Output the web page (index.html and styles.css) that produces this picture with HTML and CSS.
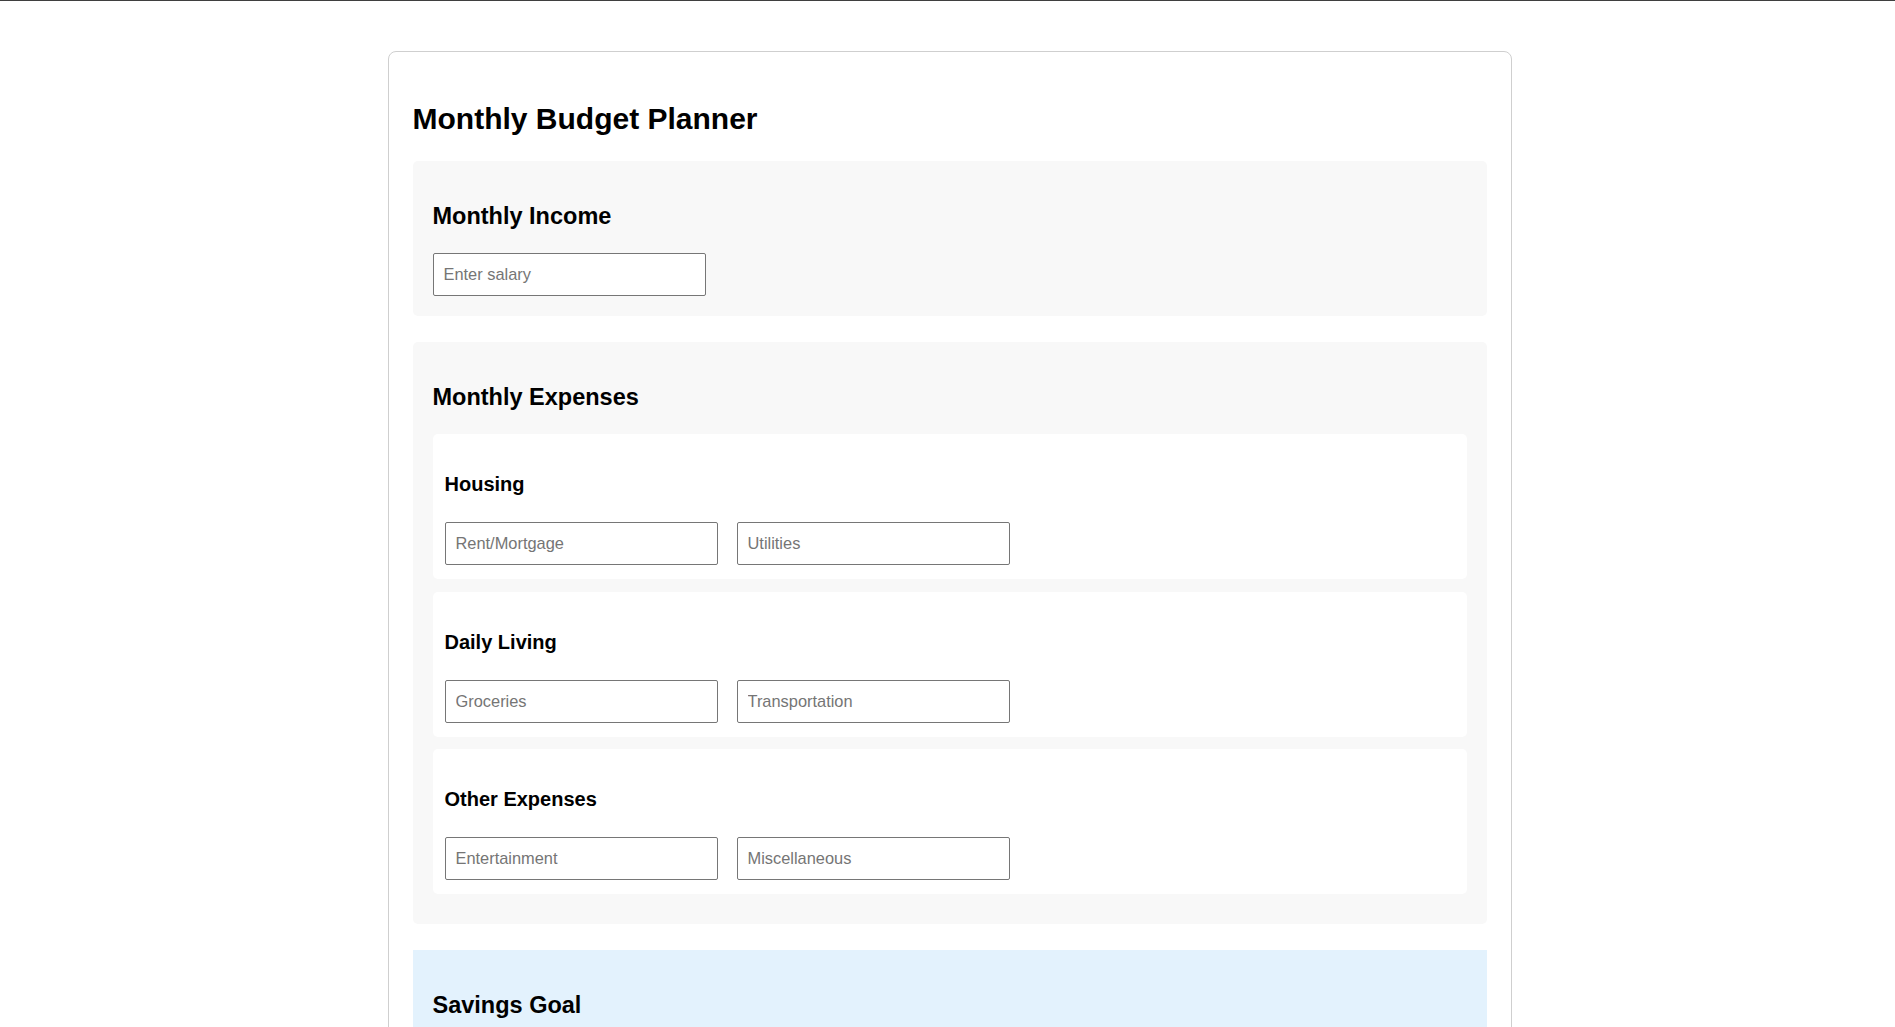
FILE: index.html
```html
<!DOCTYPE html>
<html lang="en">
<head>
<meta charset="utf-8">
<title>Monthly Budget Planner</title>
<link rel="stylesheet" href="styles.css">
</head>
<body>
<div class="container">
  <h1 class="title">Monthly Budget Planner</h1>

  <section class="section">
    <h2 class="section-title">Monthly Income</h2>
    <input class="field" type="number" placeholder="Enter salary">
  </section>

  <section class="section">
    <h2 class="section-title">Monthly Expenses</h2>
    <div class="categories">
      <div class="category">
        <h3 class="category-title">Housing</h3>
        <div class="field-row">
          <input class="field" type="number" placeholder="Rent/Mortgage">
          <input class="field" type="number" placeholder="Utilities">
        </div>
      </div>
      <div class="category">
        <h3 class="category-title">Daily Living</h3>
        <div class="field-row">
          <input class="field" type="number" placeholder="Groceries">
          <input class="field" type="number" placeholder="Transportation">
        </div>
      </div>
      <div class="category">
        <h3 class="category-title">Other Expenses</h3>
        <div class="field-row">
          <input class="field" type="number" placeholder="Entertainment">
          <input class="field" type="number" placeholder="Miscellaneous">
        </div>
      </div>
    </div>
  </section>

  <section class="section section-savings">
    <h2 class="section-title">Savings Goal</h2>
    <input class="field" type="number" placeholder="Target savings">
  </section>
</div>
</body>
</html>
```

FILE: styles.css
```css
html {
  scrollbar-width: none;
}

body {
  margin: 0;
  border-top: 1px solid #3f3f3f;
  background: #ffffff;
  font-family: "Liberation Sans", Arial, sans-serif;
  color: #000000;
}

.container {
  box-sizing: border-box;
  width: 1124px;
  margin: 50px auto 50px calc(50% - 560px);
  padding: 24.5px 24px 24px;
  border: 1px solid #cfcfcf;
  border-radius: 8px;
  background: #ffffff;
}

.title {
  margin: 24px 0;
  font-size: 30px;
  line-height: 36px;
  font-weight: bold;
}

.section {
  padding: 20px;
  margin-bottom: 25.5px;
  background: #f8f8f8;
  border-radius: 5px;
}

.section-savings {
  background: #e3f2fd;
  border-radius: 0;
}

.section-title {
  margin: 21px 0 23.5px;
  font-size: 23.5px;
  line-height: 28px;
  font-weight: bold;
}

.categories {
  display: flex;
  flex-direction: column;
  gap: 12.5px;
  margin-bottom: 10px;
}

.category {
  padding: 12px 12px 14px;
  background: #ffffff;
  border-radius: 5px;
}

.category-title {
  margin: 26px 0 26px;
  font-size: 20px;
  line-height: 24px;
  font-weight: bold;
}

.field-row {
  display: flex;
  gap: 19px;
}

.field {
  display: block;
  box-sizing: border-box;
  width: 273px;
  height: 43px;
  padding: 0 10px;
  margin: 0;
  border: 1px solid #767676;
  border-radius: 2px;
  background: #ffffff;
  font-family: "Liberation Sans", Arial, sans-serif;
  font-size: 16.4px;
  color: #000000;
}

.field::placeholder {
  color: #757575;
}

.field::-webkit-outer-spin-button,
.field::-webkit-inner-spin-button {
  -webkit-appearance: none;
  margin: 0;
}
```
